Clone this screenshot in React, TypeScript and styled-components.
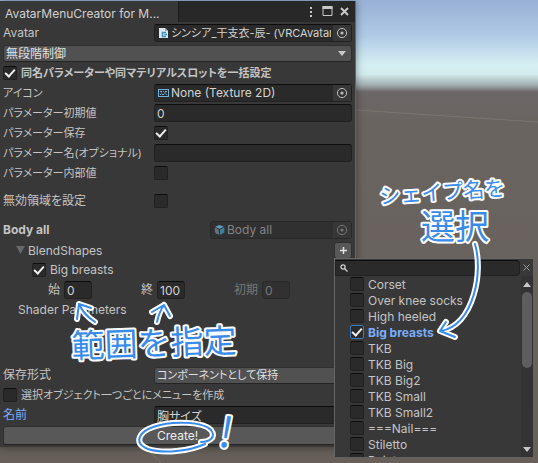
import React, { useState } from "react";
import styled, { createGlobalStyle, css } from "styled-components";

const GlobalStyle = createGlobalStyle`
  * { box-sizing: border-box; }
  body {
    margin: 0;
    font-family: Inter, "Noto Sans CJK JP", sans-serif;
    font-size: 12px;
    font-feature-settings: "palt";
    color: #c4c4c4;
    background: #67605b;
  }
  button, input, select { font: inherit; color: inherit; font-feature-settings: inherit; }
`;

const Scene = styled.main`
  position: relative;
  min-height: 100vh;
  overflow: hidden;
  background: linear-gradient(
    #98b0d4 0, #b0cae6 36px, #d4eff2 64px, #d3ecee 74px,
    #a3aeb0 85px, #6c6768 92px, #6a6461 120px, #67605a 463px
  );
`;

const Horizon = styled.svg`
  position: absolute;
  inset: 0;
  width: 100%;
  height: 100%;
`;

const Panel = styled.section`
  position: relative;
  width: 66.2%;
  margin-top: 1px;
  background: #383838;
  border-right: 1px solid #666;
  box-shadow: 0 1px 8px rgba(0, 0, 0, 0.4);
`;

const TitleBar = styled.header`
  display: flex;
  align-items: center;
  height: 21px;
  background: #282828;
`;

const Tab = styled.h1`
  margin: 0 auto 0 0;
  padding: 0 18px 0 5px;
  height: 21px;
  line-height: 25px;
  font-size: 12px;
  font-weight: 400;
  background: #383838;
  color: #d0d0d0;
  border-right: 1px solid #1c1c1c;
`;

const WindowButtons = styled.div`
  display: flex;
  gap: 4px;
  padding-right: 4px;
`;

const IconButton = styled.button`
  display: grid;
  place-items: center;
  flex: none;
  width: 13px;
  height: 16px;
  padding: 0;
  border: 0;
  background: none;
`;

const Form = styled.form`
  display: flex;
  flex-direction: column;
  padding: 1px 3px 2px;
`;

const Row = styled.div<{ $indent?: number; $before?: number; $gap?: number }>`
  display: flex;
  align-items: center;
  gap: ${(p) => p.$gap ?? 0}px;
  height: 20px;
  margin-top: ${(p) => p.$before ?? 0}px;
  padding-left: ${(p) => p.$indent ?? 0}px;
`;

const Label = styled.label<{
  $kana?: boolean; $strong?: boolean; $active?: boolean; $plain?: boolean; $wide?: boolean; $muted?: boolean;
}>`
  flex: ${(p) => (p.$plain ? "none" : p.$wide ? "0 0 207px" : "0 0 151px")};
  white-space: nowrap;
  line-height: 18px;
  font-size: ${(p) => (p.$kana ? 11 : 12)}px;
  font-weight: ${(p) => (p.$strong ? 700 : 400)};
  color: ${(p) => (p.$active ? "#7baefa" : p.$muted ? "#777" : "inherit")};
`;

const sunken = css`
  background: #2a2a2a;
  border: 1px solid #212121;
  border-top-color: #0d0d0d;
  border-radius: 3px;
`;

const TextInput = styled.input<{ $short?: boolean }>`
  ${sunken}
  flex: ${(p) => (p.$short ? "0 0 28px" : "1 1 0")};
  min-width: 0;
  width: 28px;
  height: 18px;
  padding: 0 2px;
  color: #d2d2d2;
  &:disabled { color: #777; background: #313131; border-color: #292929; }
`;

const ObjectBox = styled.div<{ $kana?: boolean; $muted?: boolean }>`
  ${sunken}
  display: flex;
  align-items: center;
  flex: 1 1 0;
  min-width: 0;
  height: 18px;
  padding-left: 3px;
  gap: 2px;
  font-size: ${(p) => (p.$kana ? 11 : 12)}px;
  color: ${(p) => (p.$muted ? "#838383" : "#d2d2d2")};
  ${(p) => p.$muted && "border-color: #282828; background: #303030;"}
`;

const ObjectName = styled.span`
  flex: 1 1 0;
  min-width: 0;
  overflow: hidden;
  white-space: nowrap;
  line-height: 16px;
`;

const Picker = styled(IconButton)`
  width: 18px;
  background: #373737;
`;

const SelectWrap = styled.div`
  display: grid;
  flex: 1 1 0;
  min-width: 0;
  align-items: center;
  justify-items: end;
  > * { grid-area: 1 / 1; }
  > svg { margin-right: 6px; pointer-events: none; }
`;

const Select = styled.select<{ $kana?: boolean }>`
  appearance: none;
  width: 100%;
  height: 17px;
  padding: 0 2px;
  font-size: ${(p) => (p.$kana ? 11 : 12)}px;
  line-height: 15px;
  color: #e0e0e0;
  background: #515151;
  border: 1px solid #303030;
  border-bottom-color: #242424;
  border-radius: 3px;
`;

const Check = styled.input.attrs({ type: "checkbox" })<{ $focus?: boolean }>`
  ${sunken}
  appearance: none;
  display: grid;
  place-items: center;
  flex: none;
  width: 14px;
  height: 14px;
  margin: 0;
  border-radius: 2px;
  ${(p) => p.$focus && "border-color: #3a79bb;"}
  &:checked::before {
    content: "";
    width: 8px;
    height: 4px;
    margin-top: -2px;
    border: solid #f0f0f0;
    border-width: 0 0 2px 2px;
    transform: rotate(-48deg);
  }
`;

const Foldout = styled.button`
  display: flex;
  align-items: center;
  gap: 3px;
  margin-right: auto;
  padding: 0;
  border: 0;
  background: none;
`;

const AddButton = styled.button`
  display: grid;
  place-items: center;
  width: 18px;
  height: 17px;
  padding: 0;
  background: #585858;
  border: 1px solid #303030;
  border-radius: 3px;
`;

const ValueCell = styled.div`
  display: flex;
  align-items: center;
  gap: 4px;
  flex: 0 0 93px;
`;

const CreateButton = styled.button`
  height: 19px;
  margin-top: 1px;
  padding: 0;
  line-height: 17px;
  color: #eee;
  background: #585858;
  border: 1px solid #303030;
  border-bottom-color: #242424;
  border-radius: 3px;
`;

const Popup = styled.aside`
  position: absolute;
  top: 258px;
  right: 5px;
  width: 199px;
  height: 199px;
  display: flex;
  flex-direction: column;
  background: #383838;
  border: solid #666;
  border-width: 1px 0 0 1px;
`;

const SearchBar = styled.div`
  display: flex;
  align-items: center;
  flex: none;
  height: 17px;
`;

const SearchField = styled.label`
  ${sunken}
  display: flex;
  align-items: center;
  flex: 1 1 0;
  min-width: 0;
  height: 16px;
  padding-left: 4px;
  gap: 4px;
  border-radius: 0 4px 4px 0;
`;

const SearchInput = styled.input`
  flex: 1 1 0;
  min-width: 0;
  height: 14px;
  padding: 0;
  border: 0;
  outline: 0;
  background: none;
`;

const PopupBody = styled.div`
  display: flex;
  flex: 1 1 0;
  min-height: 0;
`;

const ShapeList = styled.ul`
  flex: 1 1 0;
  margin: 0;
  padding: 0 0 0 15px;
  overflow: hidden;
  list-style: none;
`;

const ShapeItem = styled.label<{ $on: boolean }>`
  display: flex;
  align-items: center;
  gap: 4px;
  height: 16px;
  white-space: nowrap;
  font-weight: ${(p) => (p.$on ? 700 : 400)};
  color: ${(p) => (p.$on ? "#7baefa" : "inherit")};
`;

const ScrollBar = styled.div`
  display: flex;
  flex-direction: column;
  align-items: center;
  width: 12px;
  background: #333;
`;

const Thumb = styled.div`
  width: 10px;
  height: 76px;
  margin-bottom: auto;
  background: #5e5e5e;
  border-radius: 5px;
`;

const Notes = styled.svg`
  position: absolute;
  top: 0;
  left: 0;
  overflow: visible;
  pointer-events: none;
  text {
    font-family: "Noto Sans CJK JP", sans-serif;
    font-weight: 400;
    font-feature-settings: normal;
    fill: #398bea;
    stroke: #fff;
    stroke-width: 4px;
    stroke-linejoin: round;
    paint-order: stroke;
  }
`;

const PickerIcon = ({ color = "#bdbdbd" }: { color?: string }) => (
  <svg width="12" height="12" viewBox="0 0 12 12" fill="none" stroke={color}>
    <circle cx="6" cy="6" r="4.6" />
    <circle cx="6" cy="6" r="1.6" fill={color} stroke="none" />
  </svg>
);

const ScriptIcon = () => (
  <svg width="11" height="12" viewBox="0 0 11 12">
    <path d="M1 1h6l3 3v7H1z" fill="#dde6ea" />
    <path d="M7 1v3h3" fill="#9bb0bb" />
    <path d="M8 5.5H4.5v4H8M6.5 7.5H9" fill="none" stroke="#3792c4" strokeWidth="1.5" />
  </svg>
);

const TextureIcon = () => (
  <svg width="11" height="10" viewBox="0 0 11 10" fill="none" stroke="#6fb4dc">
    <rect x=".5" y="1.5" width="10" height="7" />
    <path d="M2 3.5h2M5 3.5h1M7 3.5h2M2 6.5h1M4 6.5h2M8 6.5h1M3 5h1M6 5h2" />
  </svg>
);

const CubeIcon = () => (
  <svg width="11" height="12" viewBox="0 0 11 12">
    <path d="M5.5 1 10 2.8 5.5 4.7 1 2.8z" fill="#5f9db8" />
    <path d="M6 5.4 10.4 3.6v5L6 11z" fill="#3e7f9c" />
    <path d="M5 5.4.8 3.6v5L5 11z" fill="#526068" />
    <path d="M1 5h2M1 7h3M2 9h3" stroke="#8e9a9f" strokeWidth=".7" />
  </svg>
);

const Caret = ({ up = false }: { up?: boolean }) => (
  <svg width="8" height="5" viewBox="0 0 8 5">
    <path d={up ? "M0 5 4 0l4 5z" : "M0 0h8L4 5z"} fill="#c8c8c8" />
  </svg>
);

const shapes = [
  "Corset", "Over knee socks", "High heeled", "Big breasts", "TKB", "TKB Big", "TKB Big2",
  "TKB Small", "TKB Small2", "===Nail===", "Stiletto", "Point",
];

const strokes = [
  "M475 244C479 258 479 277 474 294C468 314 457 328 441 331",
  "M446 322 440 331 455 337",
  "M79 304Q84 315 95 322M77 319 79 304 91 308",
  "M164 305Q159 312 157 322M152 312 164 305 170 316",
  "M205 444C190 451 163 454 148 449C133 443 139 432 153 427C173 420 204 422 211 430C217 438 208 442 201 442",
];

export default function App() {
  const [selected, setSelected] = useState<string[]>(["Big breasts"]);
  const toggle = (name: string) =>
    setSelected((s) => (s.includes(name) ? s.filter((n) => n !== name) : [...s, name]));

  return (
    <Scene>
      <GlobalStyle />
      <Horizon aria-hidden="true" stroke="#85817b" strokeWidth="1" opacity=".6">
        <path d="M356 110 538 122M150 452 164 466" />
      </Horizon>
      <Panel>
        <TitleBar>
          <Tab>AvatarMenuCreator for M...</Tab>
          <WindowButtons>
            <IconButton aria-label="Menu">
              <svg width="4" height="12" fill="#c8c8c8">
                <path d="M1 1h2v2H1zM1 5h2v2H1zM1 9h2v2H1z" />
              </svg>
            </IconButton>
            <IconButton aria-label="Maximize">
              <svg width="11" height="11" fill="none" stroke="#c8c8c8">
                <path d="M1 .5h9v9H1z" /><path d="M.5 1.5h10" strokeWidth="3" />
              </svg>
            </IconButton>
            <IconButton aria-label="Close">
              <svg width="9" height="9" stroke="#c8c8c8" strokeWidth="2"><path d="m1 1 7 7M8 1 1 8" /></svg>
            </IconButton>
          </WindowButtons>
        </TitleBar>
        <Form onSubmit={(e) => e.preventDefault()}>
          <Row>
            <Label as="span">Avatar</Label>
            <ObjectBox $kana>
              <ScriptIcon />
              <ObjectName>シンシア_干支衣-辰- (VRCAvatar</ObjectName>
              <Picker type="button" aria-label="Pick avatar"><PickerIcon /></Picker>
            </ObjectBox>
          </Row>
          <Row>
            <SelectWrap>
              <Select aria-label="制御" defaultValue="無段階制御"><option>無段階制御</option></Select>
              <Caret />
            </SelectWrap>
          </Row>
          <Row $gap={4}>
            <Check id="batch" defaultChecked />
            <Label htmlFor="batch" $kana $strong $plain>同名パラメーターや同マテリアルスロットを一括設定</Label>
          </Row>
          <Row>
            <Label as="span" $kana>アイコン</Label>
            <ObjectBox>
              <TextureIcon />
              <ObjectName>None (Texture 2D)</ObjectName>
              <Picker type="button" aria-label="Pick icon"><PickerIcon /></Picker>
            </ObjectBox>
          </Row>
          <Row><Label htmlFor="initial" $kana>パラメーター初期値</Label><TextInput id="initial" defaultValue="0" /></Row>
          <Row><Label htmlFor="saved" $kana>パラメーター保存</Label><Check id="saved" defaultChecked /></Row>
          <Row><Label htmlFor="pname" $kana>パラメーター名(オプショナル)</Label><TextInput id="pname" /></Row>
          <Row><Label htmlFor="internal" $kana>パラメーター内部値</Label><Check id="internal" /></Row>
          <Row $before={8}><Label htmlFor="invalid">無効領域を設定</Label><Check id="invalid" /></Row>
          <Row $before={9}>
            <Label as="span" $strong $wide>Body all</Label>
            <ObjectBox $muted>
              <CubeIcon />
              <ObjectName>Body all</ObjectName>
              <Picker type="button" disabled aria-label="Pick mesh"><PickerIcon color="#777" /></Picker>
            </ObjectBox>
          </Row>
          <Row $indent={13}>
            <Foldout type="button">
              <svg width="9" height="8"><path d="M0 0h9L4.5 8z" fill="#686868" /></svg>
              BlendShapes
            </Foldout>
            <AddButton type="button" aria-label="Add">
              <svg width="7" height="7" stroke="#e2e2e2"><path d="M3.5 0v7M0 3.5h7" strokeWidth="1.5" /></svg>
            </AddButton>
          </Row>
          <Row $indent={29} $gap={4}>
            <Check id="bb" defaultChecked /><Label htmlFor="bb" $plain>Big breasts</Label>
          </Row>
          <Row $indent={45}>
            <ValueCell><Label htmlFor="from" $plain>始</Label><TextInput id="from" $short defaultValue="0" /></ValueCell>
            <ValueCell><Label htmlFor="to" $plain>終</Label><TextInput id="to" $short defaultValue="100" /></ValueCell>
            <ValueCell><Label htmlFor="start" $plain $muted>初期</Label><TextInput id="start" $short disabled defaultValue="0" /></ValueCell>
          </Row>
          <Row $indent={15}><Label as="span">Shader Parameters</Label></Row>
          <Row $before={45}>
            <Label htmlFor="format">保存形式</Label>
            <SelectWrap>
              <Select id="format" $kana defaultValue="コンポーネントとして保持"><option>コンポーネントとして保持</option></Select>
              <Caret />
            </SelectWrap>
          </Row>
          <Row $gap={4}>
            <Check id="each" /><Label htmlFor="each" $kana $plain>選択オブジェクト一つごとにメニューを作成</Label>
          </Row>
          <Row><Label htmlFor="name" $active>名前</Label><TextInput id="name" defaultValue="胸サイズ" /></Row>
          <CreateButton type="submit">Create!</CreateButton>
        </Form>
      </Panel>
      <Popup>
        <SearchBar>
          <SearchField>
            <svg width="8" height="8" fill="none" stroke="#d0d0d0" strokeWidth="1.3">
              <circle cx="3" cy="3" r="2.1" /><path d="m4.5 4.5 3 3" />
            </svg>
            <SearchInput aria-label="Search" />
          </SearchField>
          <IconButton aria-label="Clear">
            <svg width="7" height="7" stroke="#999"><path d="m.5.5 6 6M6.5.5l-6 6" /></svg>
          </IconButton>
        </SearchBar>
        <PopupBody>
          <ShapeList>
            {shapes.map((name) => {
              const on = selected.includes(name);
              return (
                <li key={name}>
                  <ShapeItem $on={on}>
                    <Check $focus={on} checked={on} onChange={() => toggle(name)} />
                    {name}
                  </ShapeItem>
                </li>
              );
            })}
          </ShapeList>
          <ScrollBar>
            <IconButton aria-label="Scroll up"><Caret up /></IconButton>
            <Thumb />
            <IconButton aria-label="Scroll down"><Caret /></IconButton>
          </ScrollBar>
        </PopupBody>
      </Popup>
      <Notes width="538" height="463" viewBox="0 0 538 463">
        <text x="380" y="204" fontSize="21" transform="rotate(-4 380 204)">シェイプ名を</text>
        <text x="421" y="239" fontSize="34">選択</text>
        <text x="72" y="358" fontSize="33" transform="rotate(-2 72 358)">範囲を指定</text>
        <text x="217" y="446" fontSize="42" transform="rotate(10 217 446)">!</text>
        <g fill="none" strokeLinecap="round" strokeLinejoin="round">
          {strokes.map((d) => <path key={d} d={d} stroke="#fff" strokeWidth="6" />)}
          {strokes.map((d) => <path key={d} d={d} stroke="#398bea" strokeWidth="2" />)}
        </g>
      </Notes>
    </Scene>
  );
}
